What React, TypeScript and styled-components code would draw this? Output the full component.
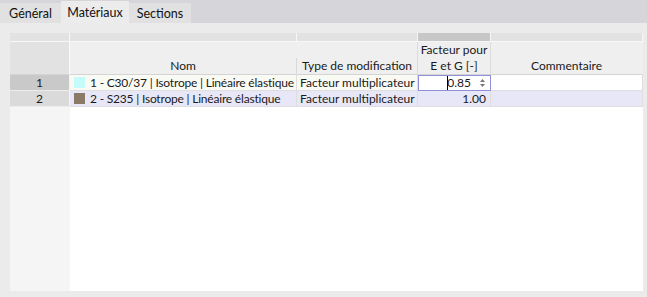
import styled, { createGlobalStyle } from 'styled-components';

const Global = createGlobalStyle`
  html, body {
    margin: 0;
    padding: 0;
    background: #ebebeb;
  }
  body {
    font-family: Lato, "Noto Sans", sans-serif;
    font-size: 12px;
    color: #1a1a1a;
  }
`;

const Window = styled.div`
  width: 647px;
  height: 297px;
  display: flex;
  flex-direction: column;
  overflow: hidden;
`;

const TabBar = styled.div`
  height: 23px;
  display: flex;
  align-items: flex-end;
  background: #d6d6da;
`;

const Tab = styled.div<{ $active?: boolean; $w: number }>`
  width: ${(p) => p.$w}px;
  height: ${(p) => (p.$active ? 22 : 20)}px;
  display: flex;
  align-items: center;
  justify-content: center;
  background: ${(p) => (p.$active ? '#ececec' : '#e1e1e1')};
  font-size: 12.5px;
  color: #111;
  box-sizing: border-box;
  padding-top: 1px;
`;

const Panel = styled.div`
  flex: 1;
  padding: 10px 4px 6px 10px;
  display: flex;
`;

const Table = styled.div`
  flex: 1;
  display: grid;
  grid-template-columns: 60px 227px 121px 73px 1fr;
  grid-template-rows: 9px 33px 16px 16px 1fr;
  font-size: 12px;
`;

const Strip = styled.div<{ $dark?: boolean }>`
  background: ${(p) => (p.$dark ? '#c7c7c7' : '#e2e2e2')};
  border-right: 1px solid #f7f7f7;
  border-bottom: 1px solid #f7f7f7;
`;

const Head = styled.div<{ $corner?: boolean; $sep?: 'full' | 'low' | 'none' }>`
  background: ${(p) => (p.$corner ? '#e2e2e2' : '#efefef')};
  border-bottom: 1px solid #d4d4d4;
  display: flex;
  flex-direction: column;
  justify-content: flex-end;
  align-items: center;
  text-align: center;
  white-space: nowrap;
  line-height: 16px;
  position: relative;
  border-right: 1px solid ${(p) => (p.$corner ? '#fbfbfb' : p.$sep === 'full' ? '#dcdcdc' : 'transparent')};
  box-sizing: border-box;
  &::after {
    content: '';
    display: ${(p) => (p.$sep === 'low' ? 'block' : 'none')};
    position: absolute;
    right: -1px;
    top: 16px;
    bottom: 0;
    width: 1px;
    background: #d8d8d8;
  }
`;

const RowNum = styled.div<{ $selected?: boolean }>`
  background: ${(p) => (p.$selected ? '#c9c9c9' : '#dadada')};
  border-right: 1px solid #f4f4f4;
  border-bottom: 1px solid #ececec;
  display: flex;
  align-items: center;
  justify-content: center;
  line-height: 15px;
`;

const Cell = styled.div<{ $bg: string; $align?: 'left' | 'right'; $tight?: boolean }>`
  background: ${(p) => p.$bg};
  border-right: 1px solid #dedede;
  border-bottom: 1px solid #dedede;
  display: flex;
  align-items: center;
  justify-content: ${(p) => (p.$align === 'right' ? 'flex-end' : 'flex-start')};
  padding: 0 ${(p) => (p.$align === 'right' ? 4 : 3)}px;
  line-height: 15px;
  letter-spacing: ${(p) => (p.$tight ? '-0.2px' : 'normal')};
  white-space: nowrap;
  overflow: hidden;
  box-sizing: border-box;
`;

const Swatch = styled.span<{ $color: string }>`
  width: 11px;
  height: 11px;
  background: ${(p) => p.$color};
  margin: 0 5px 0 1px;
  flex: none;
`;

const Editor = styled.div`
  background: #ffffff;
  border: 1px solid #8f8fdc;
  display: flex;
  align-items: center;
  justify-content: flex-end;
  padding: 0 4px 0 4px;
  line-height: 14px;
  box-sizing: border-box;
`;

const Value = styled.span`
  position: relative;
`;

const Caret = styled.span`
  position: absolute;
  left: 0;
  top: 0;
  width: 1px;
  height: 14px;
  background: #000;
`;

const Spinner = styled.svg`
  margin-left: 8px;
  flex: none;
`;

const FillerNum = styled.div`
  background: #f5f5f5;
`;

const Filler = styled.div`
  background: #ffffff;
  grid-column: 2 / 6;
`;

const ROW1 = '#fafaf4';
const ROW2 = '#e7e7f7';

export default function App() {
  return (
    <Window>
      <Global />
      <TabBar>
        <Tab $w={61}>Général</Tab>
        <Tab $w={68} $active>
          Matériaux
        </Tab>
        <Tab $w={62}>Sections</Tab>
      </TabBar>
      <Panel>
        <Table>
          <Strip />
          <Strip />
          <Strip />
          <Strip $dark />
          <Strip />

          <Head $corner />
          <Head $sep="low">Nom</Head>
          <Head $sep="full">Type de modification</Head>
          <Head $sep="full">
            <span>Facteur pour</span>
            <span>E et G [-]</span>
          </Head>
          <Head>Commentaire</Head>

          <RowNum $selected>1</RowNum>
          <Cell $bg={ROW1} $tight>
            <Swatch $color="#c6fbfb" />1 - C30/37 | Isotrope | Linéaire élastique
          </Cell>
          <Cell $bg={ROW1}>Facteur multiplicateur</Cell>
          <Editor>
            <Value>
              <Caret />
              0.85
            </Value>
            <Spinner width="7" height="10" viewBox="0 0 7 10">
              <path d="M3.5 1 L6 4 H1 Z" fill="#777" />
              <path d="M3.5 9 L6 6 H1 Z" fill="#777" />
            </Spinner>
          </Editor>
          <Cell $bg="#ffffff" />

          <RowNum>2</RowNum>
          <Cell $bg={ROW2} $tight>
            <Swatch $color="#8a7a68" />2 - S235 | Isotrope | Linéaire élastique
          </Cell>
          <Cell $bg={ROW2}>Facteur multiplicateur</Cell>
          <Cell $bg={ROW2} $align="right">
            1.00
          </Cell>
          <Cell $bg={ROW2} />

          <FillerNum />
          <Filler />
        </Table>
      </Panel>
    </Window>
  );
}
